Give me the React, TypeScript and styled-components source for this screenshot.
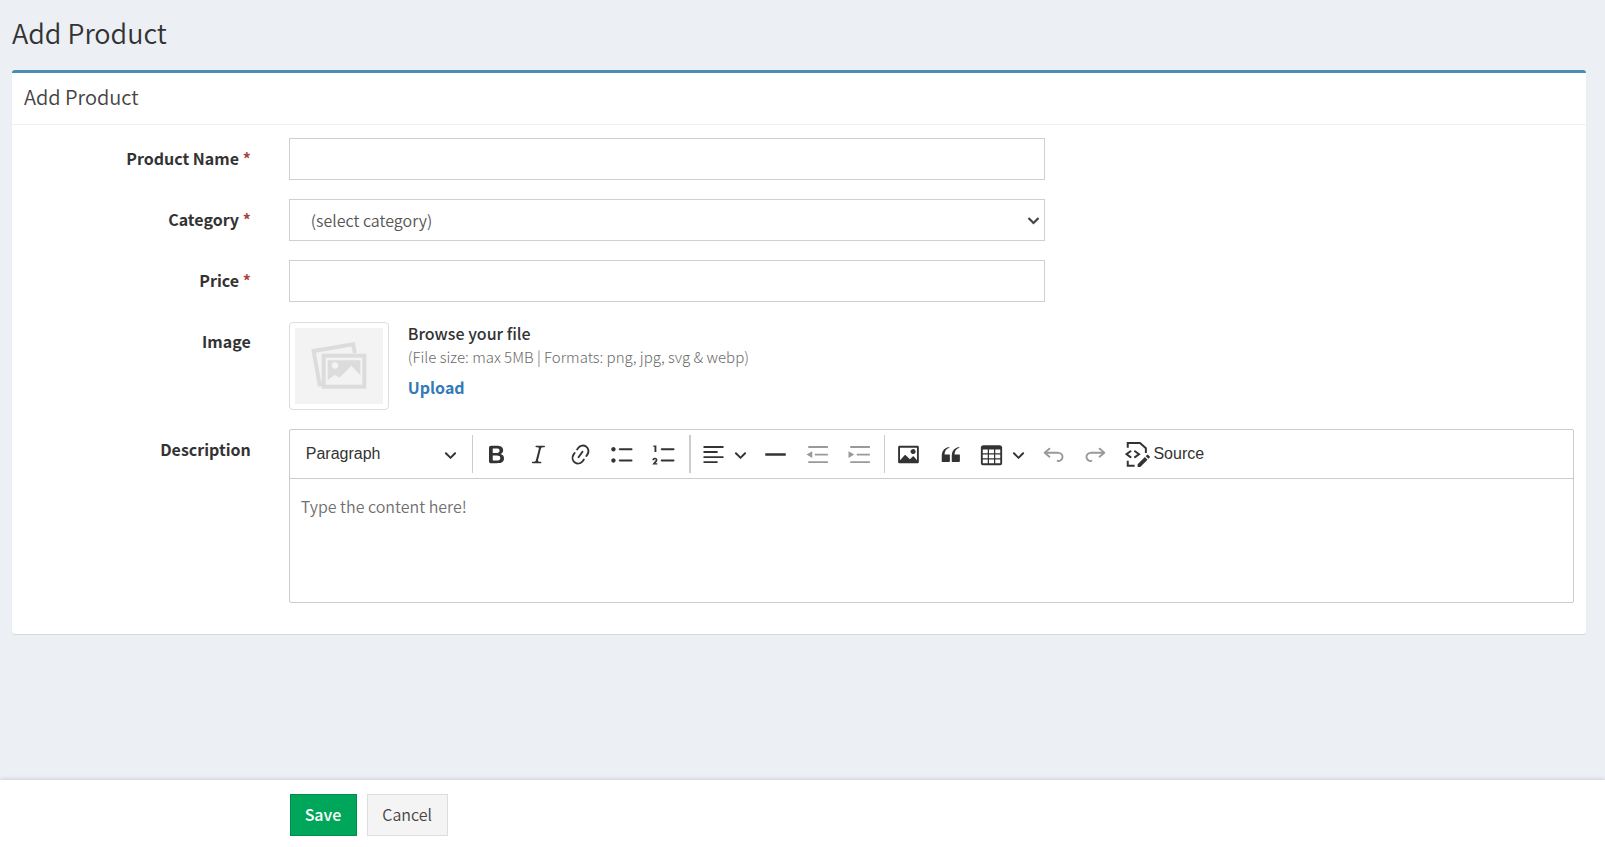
import React from "react";
import styled, { createGlobalStyle, css } from "styled-components";

const uiFont = `"Noto Sans CJK SC", "Noto Sans", sans-serif`;

const GlobalStyle = createGlobalStyle`
  *, *::before, *::after { box-sizing: border-box; }
  body {
    margin: 0;
    background: #ecf0f5;
    color: #333;
    font-family: ${uiFont};
    font-size: 16px;
    line-height: 24px;
  }
  button, input, select, textarea { font: inherit; }
`;

const Page = styled.div`
  display: flex;
  flex-direction: column;
  min-height: 100vh;
`;

const Content = styled.main`
  flex: 1;
  padding: 15px 19px 24px 12px;
`;

const PageTitle = styled.h1`
  margin: 0 0 19px;
  font-size: 27px;
  font-weight: 350;
  line-height: 36px;
`;

const Card = styled.section`
  background: #fff;
  border-top: 3px solid #4a8cb3;
  border-radius: 3px;
  box-shadow: 0 1px 1px rgba(0, 0, 0, 0.1);
`;

const CardHeader = styled.header`
  padding: 10px 12px 13px;
  border-bottom: 1px solid #f0f0f0;
`;

const CardTitle = styled.h2`
  margin: 0;
  color: #444;
  font-size: 20px;
  font-weight: 350;
  line-height: 28px;
`;

const Form = styled.form`
  display: flex;
  flex-direction: column;
  gap: 19px;
  padding: 13px 12px 31px;
`;

const formColumns = css`
  display: grid;
  grid-template-columns: 3fr 17fr;
  column-gap: 38px;
`;

const Row = styled.div`
  ${formColumns}
`;

const labelStyle = css`
  padding-top: 8px;
  font-weight: 700;
  text-align: right;
`;

const Label = styled.label`
  ${labelStyle}
`;

const Caption = styled.span`
  ${labelStyle}
`;

const Required = styled.span`
  color: #a94442;
`;

const controlWidth = css`
  width: calc(100% * 10 / 17);
`;

const control = css`
  height: 42px;
  padding: 0 12px;
  border: 1px solid #ccd0d4;
  border-radius: 0;
  background: #fff;
  color: #555;
`;

const TextInput = styled.input`
  ${controlWidth}
  ${control}
`;

const SelectBox = styled.div`
  position: relative;
  ${controlWidth}

  svg {
    position: absolute;
    top: 15px;
    right: 5px;
    color: #444;
    pointer-events: none;
  }
`;

const Select = styled.select`
  ${control}
  display: block;
  width: 100%;
  padding: 0 24px 1px 21px;
  appearance: none;
  font-weight: 350;
`;

const ImageField = styled.div`
  display: flex;
  gap: 19px;
  padding-top: 1px;
`;

const Thumb = styled.div`
  display: flex;
  width: 100px;
  height: 88px;
  padding: 5px;
  border: 1px solid #ddd;
  border-radius: 4px;
`;

const ThumbFill = styled.div`
  display: flex;
  flex: 1;
  align-items: center;
  justify-content: center;
  background: #f3f3f3;
`;

const FileInfo = styled.div`
  display: flex;
  flex-direction: column;
  align-items: flex-start;
`;

const FileTitle = styled.span`
  font-weight: 500;
  line-height: 23px;
`;

const FileHint = styled.span`
  margin-bottom: 6px;
  color: #6a6a6a;
  font-size: 15px;
  font-weight: 300;
`;

const UploadLink = styled.a`
  color: #337ab7;
  font-weight: 700;
  text-decoration: none;
`;

const Editor = styled.div`
  border: 1px solid #ccc;
  border-radius: 2px;
`;

const Toolbar = styled.div`
  display: flex;
  align-items: center;
  height: 49px;
  border-bottom: 1px solid #ccc;
  color: #333;
  font-family: "Liberation Sans", Arial, sans-serif;
  font-size: 16px;
`;

const Separator = styled.span<{ $thick?: boolean }>`
  width: ${(p) => (p.$thick ? 2 : 1)}px;
  height: 38px;
  margin: 0 3px;
  background: #ccc;
`;

const ToolButton = styled.button<{ $split?: boolean }>`
  display: flex;
  align-items: center;
  justify-content: center;
  width: ${(p) => (p.$split ? 61 : 42)}px;
  height: 40px;
  padding: 0;
  gap: ${(p) => (p.$split ? 8 : 0)}px;
  border: 0;
  background: none;
  color: inherit;

  &:disabled { color: #999; }
`;

const HeadingButton = styled(ToolButton)`
  justify-content: space-between;
  width: 179px;
  padding: 0 12px 0 16px;
`;

const SourceButton = styled(ToolButton)`
  width: 88px;
  margin-left: 4px;
  gap: 3px;
`;

const EditorBody = styled.textarea`
  display: block;
  width: 100%;
  height: 123px;
  padding: 15px 11px;
  border: 0;
  outline: 0;
  resize: none;
  background: transparent;
  font-weight: 350;

  &::placeholder { color: #707070; opacity: 1; }
`;

const Footer = styled.footer`
  position: sticky;
  bottom: 0;
  ${formColumns}
  padding: 14px 31px 11px 25px;
  background: #fff;
  box-shadow: 0 0 5px rgba(0, 0, 0, 0.2);
`;

const Actions = styled.div`
  display: flex;
  grid-column: 2;
  gap: 10px;
`;

const ActionButton = styled.button<{ $primary?: boolean }>`
  height: 42px;
  padding: 0 15px 3px 14px;
  border: 1px solid ${(p) => (p.$primary ? "#008d4c" : "#ddd")};
  background: ${(p) => (p.$primary ? "#00a65a" : "#f4f4f4")};
  color: ${(p) => (p.$primary ? "#fff" : "#444")};
  font-weight: ${(p) => (p.$primary ? 500 : 350)};
`;

const icons = {
  bold: "M10.187 17H5.773c-.637 0-1.092-.138-1.364-.415-.273-.277-.409-.718-.409-1.323V4.738c0-.617.14-1.062.419-1.332.279-.27.73-.406 1.354-.406h4.68c.69 0 1.288.041 1.793.124.506.083.96.242 1.36.478.341.197.644.447.906.75a3.262 3.262 0 0 1 .808 2.162c0 1.401-.722 2.426-2.167 3.075C15.05 10.175 16 11.315 16 13.01a3.756 3.756 0 0 1-2.296 3.504 6.1 6.1 0 0 1-1.517.377c-.571.073-1.238.11-2 .11zm-.217-6.217H7v4.087h3.069c1.977 0 2.965-.69 2.965-2.072 0-.707-.256-1.22-.768-1.537-.512-.319-1.277-.478-2.296-.478zM7 5.13v3.619h2.606c.729 0 1.292-.067 1.69-.2a1.6 1.6 0 0 0 .91-.765c.165-.267.247-.566.247-.897 0-.707-.26-1.176-.778-1.409-.519-.232-1.31-.348-2.375-.348H7z",
  italic: "m9.586 14.633.021.004c-.036.335.095.655.393.962.082.083.173.15.274.201h1.474a.6.6 0 1 1 0 1.2H5.304a.6.6 0 0 1 0-1.2h1.15c.474-.07.809-.182 1.005-.334.157-.122.291-.32.404-.597l2.416-9.55a1.053 1.053 0 0 0-.281-.823 1.12 1.12 0 0 0-.442-.296H8.15a.6.6 0 0 1 0-1.2h6.443a.6.6 0 1 1 0 1.2h-1.195c-.376.056-.65.155-.823.296-.215.175-.423.439-.623.79l-2.366 9.347z",
  link: "m11.077 15 .991-1.416a.75.75 0 1 1 1.229.86l-1.148 1.64a.748.748 0 0 1-.217.206 5.251 5.251 0 0 1-8.503-5.955.741.741 0 0 1 .12-.274l1.147-1.639a.75.75 0 1 1 1.228.86L4.933 10.7l.006.003a3.75 3.75 0 0 0 6.132 4.294l.006.004zm5.494-5.335a.748.748 0 0 1-.12.274l-1.147 1.639a.75.75 0 1 1-1.228-.86l.86-1.23a3.75 3.75 0 0 0-6.144-4.301l-.86 1.229a.75.75 0 0 1-1.229-.86l1.148-1.64a.748.748 0 0 1 .217-.206 5.251 5.251 0 0 1 8.503 5.955zm-4.563-2.532a.75.75 0 0 1 .184 1.045l-3.155 4.505a.75.75 0 1 1-1.229-.86l3.155-4.506a.75.75 0 0 1 1.045-.184z",
  bullets: "M7 5.75c0 .414.336.75.75.75h9.5a.75.75 0 1 0 0-1.5h-9.5a.75.75 0 0 0-.75.75zm-6 0C1 4.784 1.777 4 2.75 4c.966 0 1.75.777 1.75 1.75 0 .966-.777 1.75-1.75 1.75C1.784 7.5 1 6.723 1 5.75zm6 9c0 .414.336.75.75.75h9.5a.75.75 0 1 0 0-1.5h-9.5a.75.75 0 0 0-.75.75zm-6 0c0-.966.777-1.75 1.75-1.75.966 0 1.75.777 1.75 1.75 0 .966-.777 1.75-1.75 1.75-.966 0-1.75-.777-1.75-1.75z",
  numbers: "M7 5.75c0 .414.336.75.75.75h9.5a.75.75 0 1 0 0-1.5h-9.5a.75.75 0 0 0-.75.75zM3.5 3v5H2V3.7H1v-1h2.5V3zM.343 17.857l2.59-3.257H2.92a.6.6 0 1 0-1.04 0H.302a2 2 0 1 1 3.995 0h-.001c-.048.405-.16.734-.333.988-.175.254-.59.692-1.244 1.312H4.3v1h-4l.043-.043zM7 14.75a.75.75 0 0 1 .75-.75h9.5a.75.75 0 1 1 0 1.5h-9.5a.75.75 0 0 1-.75-.75z",
  alignLeft: "M2 3.2h16v1.5H2zM2 7.2h11.3v1.5H2zM2 11.3h16v1.5H2zM2 15.3h11.3v1.5H2z",
  rule: "M1.8 9h16.4v2H1.8z",
  outdent: "M2.6 3.2h15.7v1.5H2.6zM7.8 9.3h10.5v1.5H7.8zM2.6 15.3h15.7v1.5H2.6zM1.2 10l4.6-2.7v5.4z",
  indent: "M2.6 3.2h15.7v1.5H2.6zM7.8 9.3h10.5v1.5H7.8zM2.6 15.3h15.7v1.5H2.6zM5.8 10L1.2 7.3v5.4z",
  image: "M6.91 10.54c.26-.23.64-.21.88.03l3.36 3.14 2.23-2.06a.64.64 0 0 1 .87 0l2.52 2.97V4.5H3.2v10.12l3.71-4.08zm10.27-7.51c.6 0 1.09.47 1.09 1.05v11.84c0 .59-.49 1.06-1.09 1.06H2.79c-.6 0-1.09-.47-1.09-1.06V4.08c0-.58.49-1.05 1.1-1.05h14.38zm-5.22 5.56a1.96 1.96 0 1 1 3.4-1.96 1.96 1.96 0 0 1-3.4 1.96z",
  quote: "M3 10.423a6.5 6.5 0 0 1 6.056-6.408l.038.67C6.448 5.423 5.354 7.663 5.22 10H9c.552 0 .5.432.5.986v4.511c0 .554-.448.503-1 .503h-5c-.552 0-.5-.449-.5-1.003v-4.574zm8 0a6.5 6.5 0 0 1 6.056-6.408l.038.67c-2.646.739-3.74 2.979-3.873 5.315H17c.552 0 .5.432.5.986v4.511c0 .554-.448.503-1 .503h-5c-.552 0-.5-.449-.5-1.003v-4.574z",
  table: "M3 6v3h4V6H3zm0 4v3h4v-3H3zm0 4v3h4v-3H3zm5 3h4v-3H8v3zm5 0h4v-3h-4v3zm4-4v-3h-4v3h4zm0-4V6h-4v3h4zm1.5 8a1.5 1.5 0 0 1-1.5 1.5H3A1.5 1.5 0 0 1 1.5 17V4c.222-.863 1.068-1.5 2-1.5h13c.932 0 1.778.637 2 1.5v13zM12 13v-3H8v3h4zm0-4V6H8v3h4z",
  undo: "m5.042 9.367 2.189 1.837a.75.75 0 0 1-.965 1.149l-3.788-3.18a.747.747 0 0 1-.21-.284.75.75 0 0 1 .17-.945L6.23 4.762a.75.75 0 1 1 .964 1.15L4.863 7.866h8.917A.75.75 0 0 1 14 7.9a4 4 0 1 1-1.477 7.718l.344-1.489a2.5 2.5 0 1 0 1.094-4.73l.008-.032H5.042z",
};

type IconName = keyof typeof icons;

const Icon = ({ name, flip }: { name: IconName; flip?: boolean }) => (
  <svg width="25" height="25" viewBox="0 0 20 20" fill="currentColor" aria-hidden="true">
    <path d={icons[name]} transform={flip ? "matrix(-1 0 0 1 20 0)" : undefined} />
  </svg>
);

const SourceIcon = () => (
  <svg width="25" height="25" viewBox="0 0 20 20" fill="none" stroke="currentColor" strokeWidth="1.6" aria-hidden="true">
    <path d="M2.2 4.6V.8H12l4.7 4.1v3.8M2.2 15v3.9h5.5" />
    <path d="M4.4 7.4 1.2 9.75l3.2 2.35M8 7.4l3.2 2.35L8 12.1" strokeLinecap="round" />
    <path fill="currentColor" stroke="none" d="m15.9 12 2.1 2.1-5.8 5.8h-2.1v-2.1zM18.4 10.2l1.4 1.4a.5.5 0 0 1 0 .7l-1 1.1-2.2-2.1 1.1-1.1a.5.5 0 0 1 .7 0z" />
  </svg>
);

const Chevron = () => (
  <svg width="13" height="13" viewBox="0 0 10 10" fill="currentColor" aria-hidden="true">
    <path d="M.941 4.523a.75.75 0 1 1 1.06-1.06l3.006 3.005 3.005-3.005a.75.75 0 1 1 1.06 1.06l-3.549 3.55a.75.75 0 0 1-1.168-.136L.941 4.523z" />
  </svg>
);

const SelectArrow = () => (
  <svg width="13" height="13" viewBox="0 0 13 13" fill="none" stroke="currentColor" strokeWidth="2.2" aria-hidden="true">
    <path d="M1.5 4 6.5 9l5-5" />
  </svg>
);

const PhotosIcon = () => (
  <svg width="56" height="48" viewBox="0 0 56 48" fill="none" stroke="#dcdcdc" strokeWidth="4" aria-hidden="true">
    <path d="M12 41.9 8.6 42.5 2.6 9 42.2 2.4 43.8 11" />
    <rect x="12.7" y="13.7" width="40.6" height="31" />
    <path d="M16.7 18.3V38l7-5 5 2.5 11.6-11.8 9 9.3V18.3z" fill="#dcdcdc" stroke="none" />
    <circle cx="24" cy="23.5" r="3.2" fill="#f3f3f3" stroke="none" />
  </svg>
);

const Tool = ({ name, label, flip, disabled, split }: {
  name: IconName; label: string; flip?: boolean; disabled?: boolean; split?: boolean;
}) => (
  <ToolButton type="button" aria-label={label} disabled={disabled} $split={split}>
    <Icon name={name} flip={flip} />
    {split && <Chevron />}
  </ToolButton>
);

export default function App() {
  return (
    <Page>
      <GlobalStyle />
      <Content>
        <PageTitle>Add Product</PageTitle>
        <Card>
          <CardHeader>
            <CardTitle>Add Product</CardTitle>
          </CardHeader>
          <Form id="product-form" onSubmit={(e) => e.preventDefault()}>
            <Row>
              <Label htmlFor="name">Product Name <Required>*</Required></Label>
              <TextInput id="name" type="text" />
            </Row>
            <Row>
              <Label htmlFor="category">Category <Required>*</Required></Label>
              <SelectBox>
                <Select id="category">
                  <option>(select category)</option>
                </Select>
                <SelectArrow />
              </SelectBox>
            </Row>
            <Row>
              <Label htmlFor="price">Price <Required>*</Required></Label>
              <TextInput id="price" type="text" />
            </Row>
            <Row>
              <Caption>Image</Caption>
              <ImageField>
                <Thumb><ThumbFill><PhotosIcon /></ThumbFill></Thumb>
                <FileInfo>
                  <FileTitle>Browse your file</FileTitle>
                  <FileHint>(File size: max 5MB | Formats: png, jpg, svg &amp; webp)</FileHint>
                  <UploadLink href="#upload">Upload</UploadLink>
                </FileInfo>
              </ImageField>
            </Row>
            <Row>
              <Label htmlFor="description">Description</Label>
              <Editor>
                <Toolbar role="toolbar" aria-label="Editor toolbar">
                  <HeadingButton type="button">Paragraph <Chevron /></HeadingButton>
                  <Separator />
                  <Tool name="bold" label="Bold" />
                  <Tool name="italic" label="Italic" />
                  <Tool name="link" label="Link" />
                  <Tool name="bullets" label="Bulleted list" />
                  <Tool name="numbers" label="Numbered list" />
                  <Separator $thick />
                  <Tool name="alignLeft" label="Text alignment" split />
                  <Tool name="rule" label="Horizontal line" />
                  <Tool name="outdent" label="Decrease indent" disabled />
                  <Tool name="indent" label="Increase indent" disabled />
                  <Separator />
                  <Tool name="image" label="Insert image" />
                  <Tool name="quote" label="Block quote" />
                  <Tool name="table" label="Insert table" split />
                  <Tool name="undo" label="Undo" disabled />
                  <Tool name="undo" label="Redo" flip disabled />
                  <SourceButton type="button"><SourceIcon />Source</SourceButton>
                </Toolbar>
                <EditorBody id="description" placeholder="Type the content here!" />
              </Editor>
            </Row>
          </Form>
        </Card>
      </Content>
      <Footer>
        <Actions>
          <ActionButton $primary type="submit" form="product-form">Save</ActionButton>
          <ActionButton type="button">Cancel</ActionButton>
        </Actions>
      </Footer>
    </Page>
  );
}
